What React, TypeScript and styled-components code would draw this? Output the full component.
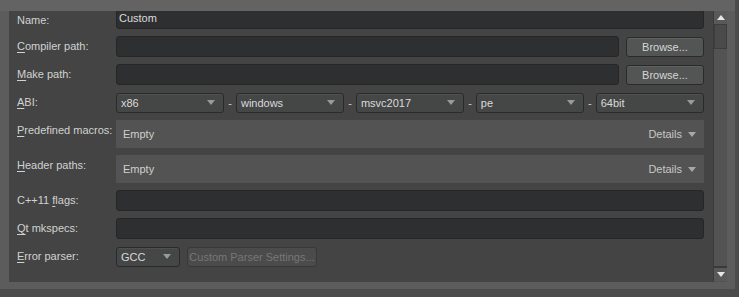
import { Fragment } from 'react';
import styled, { createGlobalStyle } from 'styled-components';

const GlobalStyle = createGlobalStyle`
  html, body {
    margin: 0;
    padding: 0;
    background: #4b4b4b;
  }
  body {
    font-family: "Liberation Sans", Arial, sans-serif;
    font-size: 11px;
  }
`;

const Frame = styled.div`
  width: 735px;
  height: 289px;
  box-sizing: border-box;
  padding: 11px 8px 7px 9px;
  background: linear-gradient(#636363 0, #636363 11px, #5c5c5c 11px);
  display: flex;
`;

const Content = styled.div`
  flex: 1;
  background: #434443;
  padding: 0 9px 0 8px;
  display: grid;
  grid-template-columns: 99px 1fr;
  row-gap: 7px;
  align-content: start;
  overflow: hidden;
`;

const Label = styled.div<{ $lh?: number }>`
  color: #d2d2d2;
  line-height: ${(p) => p.$lh ?? 21}px;
  white-space: nowrap;
  align-self: start;

  u {
    text-decoration: underline;
    text-underline-offset: 2px;
  }
`;

const Field = styled.div<{ $h?: number }>`
  height: ${(p) => p.$h ?? 21}px;
  display: flex;
  align-items: center;
  gap: 7px;
`;

const Input = styled.div`
  flex: 1;
  height: 21px;
  box-sizing: border-box;
  background: #2e2f30;
  border: 1px solid #262626;
  border-radius: 3px;
  color: #dcdcdc;
  line-height: 19px;
  padding: 0 2px;
`;

const Clip = styled.div`
  flex: 1;
  height: 18px;
  overflow: hidden;
  display: flex;
  align-items: flex-end;
`;

const Button = styled.div<{ $disabled?: boolean; $w: number }>`
  width: ${(p) => p.$w}px;
  height: 20px;
  box-sizing: border-box;
  border: 1px solid ${(p) => (p.$disabled ? '#383838' : '#2a2a2a')};
  border-radius: 3px;
  background: ${(p) => (p.$disabled ? '#4a4b4a' : '#535454')};
  box-shadow: ${(p) => (p.$disabled ? 'none' : 'inset 0 1px 0 #5f6060')};
  color: ${(p) => (p.$disabled ? '#777' : '#d6d6d6')};
  text-align: center;
  line-height: 18px;
  white-space: nowrap;
`;

const Combo = styled.div<{ $w?: number }>`
  ${(p) => (p.$w ? `width: ${p.$w}px;` : 'flex: 1;')}
  height: 20px;
  box-sizing: border-box;
  border: 1px solid #2a2a2a;
  border-radius: 3px;
  background: #454646;
  box-shadow: inset 0 1px 0 #4f5050;
  color: #dadada;
  line-height: 18px;
  padding: 0 0 0 4px;
  display: flex;
  align-items: center;
  justify-content: space-between;
`;

const Arrow = styled.span<{ $color?: string }>`
  width: 0;
  height: 0;
  border-left: 4px solid transparent;
  border-right: 4px solid transparent;
  border-top: 5px solid ${(p) => p.$color ?? '#9a9a9a'};
  margin-right: 8px;
`;

const Dash = styled.span`
  color: #cfcfcf;
  margin: 0 -3px;
`;

const Details = styled.div`
  flex: 1;
  height: 28px;
  background: #525352;
  color: #d0d0d0;
  display: flex;
  align-items: center;
  justify-content: space-between;
  padding-left: 7px;
`;

const DetailsToggle = styled.span`
  display: flex;
  align-items: center;
  gap: 6px;
  color: #c8c8c8;
`;

const Scrollbar = styled.div`
  width: 14px;
  background: #535353;
  border-left: 1px solid #3b3b3b;
  box-sizing: border-box;
  display: flex;
  flex-direction: column;
`;

const ScrollButton = styled.div<{ $down?: boolean }>`
  height: 13px;
  background: #595959;
  display: flex;
  align-items: center;
  justify-content: center;
  ${(p) => (p.$down ? 'border-top: 2px solid #3a3a3a; margin-bottom: 1px;' : '')}
`;

const Tri = styled.span<{ $down?: boolean }>`
  width: 0;
  height: 0;
  border-left: 4px solid transparent;
  border-right: 4px solid transparent;
  ${(p) => (p.$down ? 'border-top: 5px solid #e6e6e6;' : 'border-bottom: 5px solid #e6e6e6;')}
`;

const Handle = styled.div`
  height: 23px;
  background: #4a4a4a;
  border: 1px solid #3d3d3d;
`;

const Track = styled.div`
  flex: 1;
`;

const abi = ['x86', 'windows', 'msvc2017', 'pe', '64bit'];

const DetailsBox = () => (
  <Field $h={28}>
    <Details>
      Empty
      <DetailsToggle>
        Details
        <Arrow $color="#a8a8a8" />
      </DetailsToggle>
    </Details>
  </Field>
);

export default function App() {
  return (
    <>
      <GlobalStyle />
      <Frame>
        <Content>
          <Label $lh={18}>Name:</Label>
          <Field $h={18}>
            <Clip>
              <Input>Custom</Input>
            </Clip>
          </Field>

          <Label>
            <u>C</u>ompiler path:
          </Label>
          <Field>
            <Input />
            <Button $w={78}>Browse...</Button>
          </Field>

          <Label>
            <u>M</u>ake path:
          </Label>
          <Field>
            <Input />
            <Button $w={78}>Browse...</Button>
          </Field>

          <Label>
            <u>A</u>BI:
          </Label>
          <Field>
            {abi.map((v, i) => (
              <Fragment key={v}>
                {i > 0 && <Dash>-</Dash>}
                <Combo>
                  {v}
                  <Arrow />
                </Combo>
              </Fragment>
            ))}
          </Field>

          <Label>
            <u>P</u>redefined macros:
          </Label>
          <DetailsBox />

          <Label>
            <u>H</u>eader paths:
          </Label>
          <DetailsBox />

          <Label>
            C++11 <u>f</u>lags:
          </Label>
          <Field>
            <Input />
          </Field>

          <Label>
            <u>Q</u>t mkspecs:
          </Label>
          <Field>
            <Input />
          </Field>

          <Label>
            <u>E</u>rror parser:
          </Label>
          <Field>
            <Combo $w={64}>
              GCC
              <Arrow />
            </Combo>
            <Button $disabled $w={130}>
              Custom Parser Settings...
            </Button>
          </Field>
        </Content>
        <Scrollbar>
          <ScrollButton>
            <Tri />
          </ScrollButton>
          <Handle />
          <Track />
          <ScrollButton $down>
            <Tri $down />
          </ScrollButton>
        </Scrollbar>
      </Frame>
    </>
  );
}
